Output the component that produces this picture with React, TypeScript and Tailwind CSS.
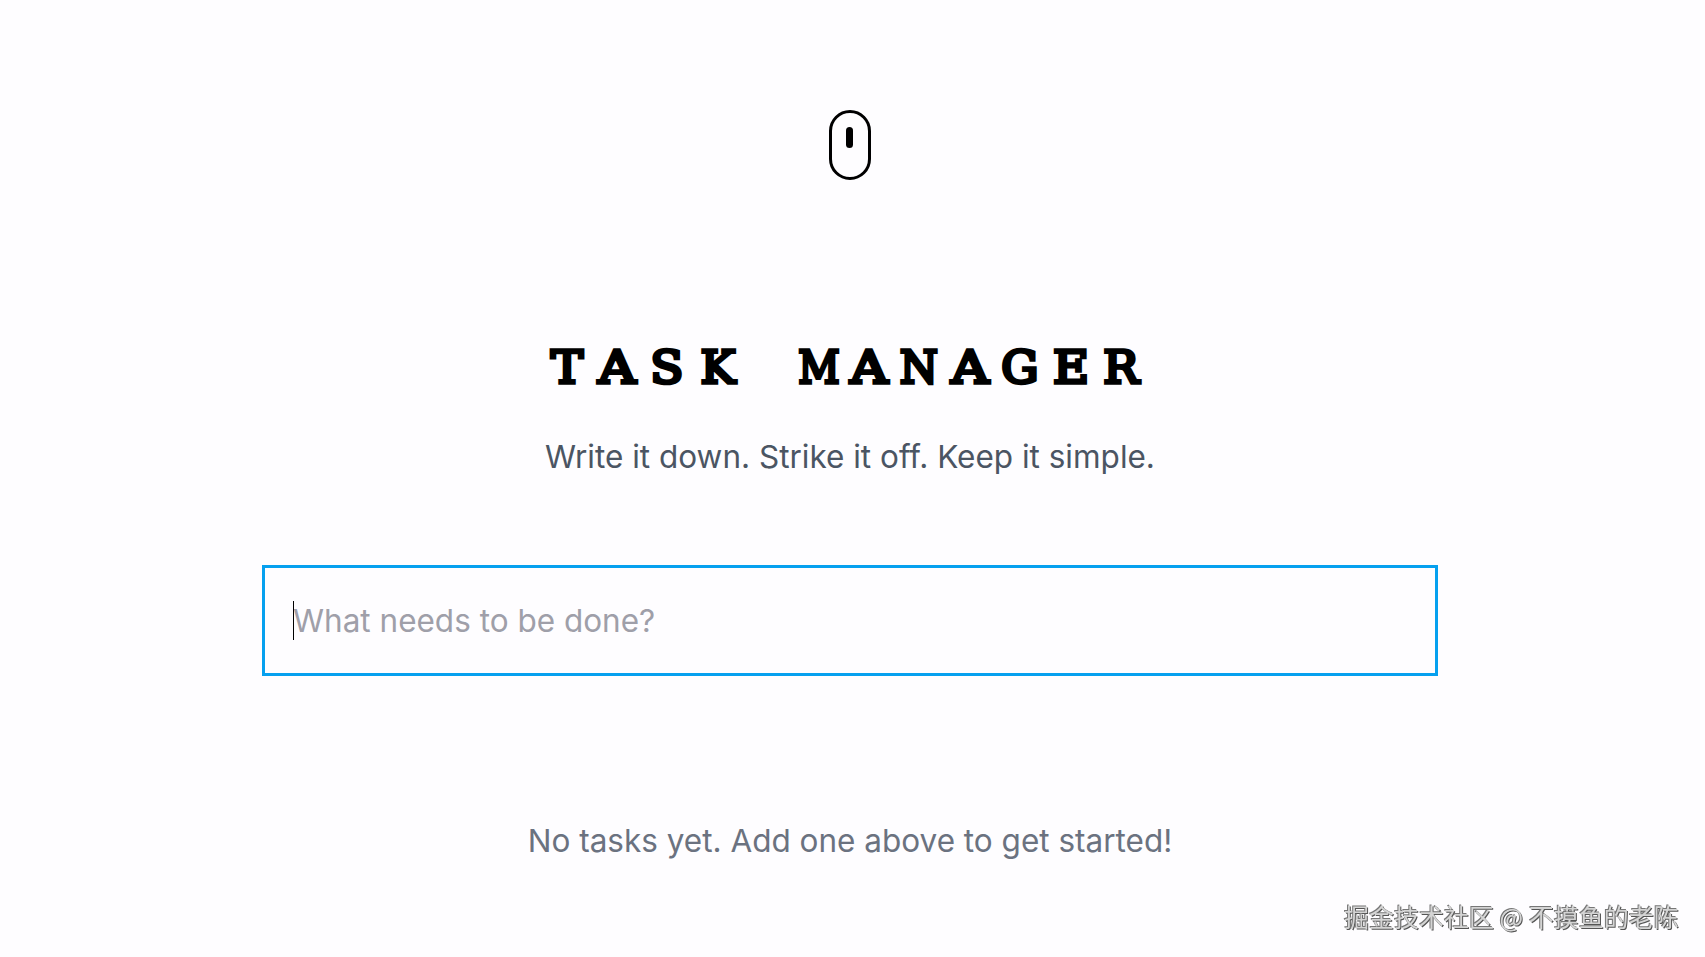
import { useState } from "react"

// Typewriter heading: every glyph sits in a fixed-pitch cell
const TITLE = [
  { char: "T", fit: "scale-x-[1.09]" },
  { char: "A", fit: "scale-x-[1.18]" },
  { char: "S", fit: "scale-x-[1.1]" },
  { char: "K", fit: "scale-x-[1.06]" },
  { char: " ", fit: "" },
  { char: "M", fit: "scale-x-[0.92]" },
  { char: "A", fit: "scale-x-[1.18]" },
  { char: "N", fit: "scale-x-[0.99]" },
  { char: "A", fit: "scale-x-[1.18]" },
  { char: "G", fit: "scale-x-[1.06]" },
  { char: "E", fit: "scale-x-[1.12]" },
  { char: "R", fit: "scale-x-[1.07]" },
]

function MouseIcon() {
  return (
    <div className="h-[70px] w-[42px] rounded-full border-[3px] border-black pl-[14px] pt-[14px]">
      <div className="h-[21px] w-[7px] rounded-full bg-black" />
    </div>
  )
}

function Title() {
  return (
    <h1 className="flex h-[70px] whitespace-pre font-['DejaVu_Serif',serif] text-[44px] font-normal leading-[70px] text-black [-webkit-text-stroke:3.5px_black]">
      {TITLE.map(({ char, fit }, i) => (
        <span key={i} className="flex w-[50.4px] justify-start">
          <span className={`flex w-[37.8px] shrink-0 justify-center ${fit}`}>{char}</span>
        </span>
      ))}
    </h1>
  )
}

export default function App() {
  const [task, setTask] = useState("")

  return (
    <div className="relative h-[957px] overflow-hidden bg-[#fefdff] font-['Inter',sans-serif] text-[31.5px] leading-[49px]">
      <main className="flex w-[1700px] flex-col items-center pt-[110px]">
        <MouseIcon />

        <div className="mt-[153px]">
          <Title />
        </div>
        <p className="mt-[29px] text-[#4b5563]">Write it down. Strike it off. Keep it simple.</p>

        <div className="relative mt-[84px] h-[111px] w-[1176px]">
          <input
            value={task}
            onChange={(e) => setTask(e.target.value)}
            placeholder="What needs to be done?"
            className="h-full w-full border-[3px] border-[#06a0ef] px-7 py-7 outline-none placeholder:text-[#9f9fa9]"
          />
          {/* Caret */}
          <span className="absolute left-[31px] top-[36px] h-[39px] w-px bg-black" />
        </div>

        <p className="mt-[140px] text-[#6b7280]">No tasks yet. Add one above to get started!</p>
      </main>

      {/* Community watermark */}
      <div className="absolute bottom-[23px] right-[26px] whitespace-nowrap font-['Noto_Sans_CJK_SC',sans-serif] text-[25px] leading-[36px] text-[#d4d4d4] will-change-transform [text-shadow:-1px_-1px_0_#777,1px_1px_0_#555]">
        掘金技术社区 @ 不摸鱼的老陈
      </div>
    </div>
  )
}
